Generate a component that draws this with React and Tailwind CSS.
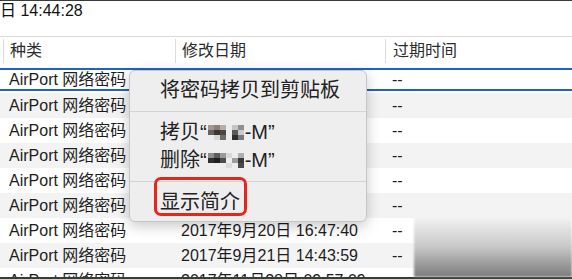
import React from "react";

const font = { fontFamily: '"Liberation Sans", "Noto Sans CJK SC", sans-serif' };

const rows = [
  { date: "2017年9月14日 10:21:33" },
  { date: "2017年9月15日 09:12:08" },
  { date: "2017年9月16日 18:30:51" },
  { date: "2017年9月17日 11:05:27" },
  { date: "2017年9月18日 20:44:12" },
  { date: "2017年9月19日 08:16:45" },
  { date: "2017年9月20日 16:47:40" },
  { date: "2017年9月21日 14:43:59" },
];

const Cells = ({ date, dash = true }) => (
  <div className="flex text-[16px] leading-[25px] text-[#1d1d1d] whitespace-nowrap">
    <div className="w-[175px] pl-[9px]">AirPort 网络密码</div>
    <div className="w-[210px] pl-[6px]">{date}</div>
    <div className="flex-1 pl-[7px]">{dash ? "--" : ""}</div>
  </div>
);

const Mosaic = ({ cells }) => (
  <span className="inline-grid grid-cols-[repeat(6,6px)] grid-rows-[repeat(3,5px)] align-[-1px] mx-[1px]">
    {cells.map((c, i) => (
      <span key={i} style={{ background: c }} />
    ))}
  </span>
);

const copyCells = [
  "#a39891", "#8d7f78", "#b7aca6", "#ededed", "#c4c4c4", "#8f8f8f",
  "#6a5f59", "#3b3633", "#4d4743", "#ededed", "#5a5a5a", "#c9c9c9",
  "#ededed", "#d7d7d7", "#6e6e6e", "#ededed", "#2e2e2e", "#7a7a7a",
];

const deleteCells = [
  "#8e8e8e", "#5c5c5c", "#9a9a9a", "#d8d8d8", "#ededed", "#b0b0b0",
  "#2f2f2f", "#1f1f1f", "#4c4c4c", "#ededed", "#9c9c9c", "#3a3a3a",
  "#ededed", "#ededed", "#ededed", "#dcdcdc", "#ededed", "#4a4a4a",
];

const MenuItem = ({ children }) => (
  <div className="h-[28px] flex items-center pl-[30px] text-[20px] text-[#222] whitespace-nowrap">
    {children}
  </div>
);

const Separator = () => (
  <div className="h-[14px] flex items-center">
    <div className="h-px w-full bg-[#d4d4d4]" />
  </div>
);

export default function App() {
  return (
    <div className="relative w-[572px] h-[279px] overflow-hidden bg-white flex flex-col" style={font}>
      <div className="h-px bg-[#3a3a3a]" />
      <div className="h-[20px] text-[16px] leading-[20px] text-[#111] whitespace-nowrap">日 14:44:28</div>
      <div className="h-[15px]" />

      {/* header */}
      <div className="h-[32px] border-t border-[#dcdcdc] flex text-[16px] text-[#2b2b2b] whitespace-nowrap">
        <div className="w-[3px]" />
        <div className="w-[172px] mt-[2px] h-[24px] border-l border-[#dcdcdc] pl-[6px] leading-[24px]">种类</div>
        <div className="w-[210px] mt-[2px] h-[24px] border-l border-[#dcdcdc] pl-[6px] leading-[24px]">修改日期</div>
        <div className="flex-1 mt-[2px] h-[24px] border-l border-[#dcdcdc] pl-[7px] leading-[24px]">过期时间</div>
      </div>

      {/* selected row */}
      <div className="h-[25px] flex flex-col">
        <div className="h-[2px] bg-[#1f63c6]" />
        <div className="h-[19px] flex items-center">
          <div className="w-full">
            <Cells date={rows[0].date} />
          </div>
        </div>
        <div className="h-[2px] bg-[#1f63c6]" />
      </div>

      {rows.slice(1).map((r, i) => (
        <div key={i} className={i % 2 === 0 ? "h-[25px] bg-[#f3f3f3]" : "h-[25px] bg-white"}>
          <Cells date={r.date} />
        </div>
      ))}

      <div className="h-[9px] overflow-hidden bg-white">
        <Cells date="2017年11月28日 09:57:09" dash={false} />
      </div>
      <div className="h-[2px] bg-[#3a3a3a]" />

      {/* context menu */}
      <div className="absolute left-[129px] top-[70px] w-[238px] h-[152px] rounded-[6px] border border-[#c6c6c6] bg-[#eeeeee] shadow-[0_4px_14px_rgba(0,0,0,0.22)] py-[5px]">
        <MenuItem>将密码拷贝到剪贴板</MenuItem>
        <Separator />
        <MenuItem>
          拷贝“<Mosaic cells={copyCells} />-M”
        </MenuItem>
        <MenuItem>
          删除“<Mosaic cells={deleteCells} />-M”
        </MenuItem>
        <Separator />
        <MenuItem>显示简介</MenuItem>
      </div>

      {/* annotation */}
      <div className="absolute left-[154px] top-[177px] w-[93px] h-[39px] border-[3px] border-[#e5261c] rounded-[7px]" />

      {/* blurred watermark */}
      <div className="absolute left-[414px] top-[216px] w-[158px] h-[61px] bg-gradient-to-b from-[#f4f4f4] via-[#c9c9c9] to-[#7c7c7c] blur-[1px]" />
    </div>
  );
}
